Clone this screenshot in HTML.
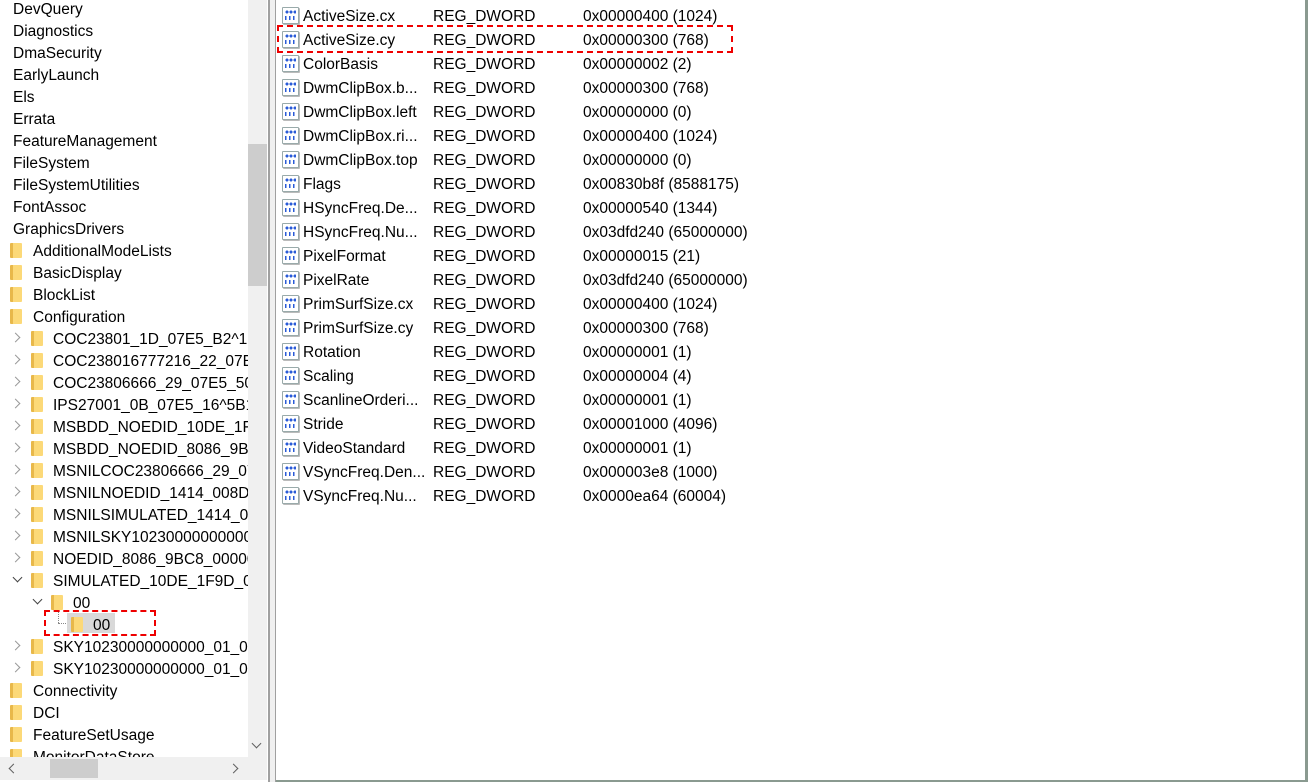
<!DOCTYPE html>
<html><head><meta charset="utf-8"><style>
body{margin:0;width:1308px;height:782px;background:#fff;position:relative;overflow:hidden;font-family:"Liberation Sans","Noto Sans CJK SC",sans-serif;font-size:15.5px;color:#000}
.l{position:absolute;white-space:nowrap;line-height:22px;height:22px;padding-top:2px}
.f{position:absolute;width:12px;height:15px;background:linear-gradient(90deg,#e8b84a 0 3px,#fcd978 3px);border-radius:1px}
.ch{position:absolute;width:6px;height:6px;border-right:1.5px solid #999;border-bottom:1.5px solid #999}
.r{position:absolute;left:280px;height:24px;line-height:24px;white-space:nowrap}
.r span{position:absolute;top:2px}
.ic{position:absolute;left:2px;top:4px;width:15px;height:15px;border:1px solid #9aa;background:#fff;border-radius:1px;box-shadow:1px 1px 0 #bbb}
.ic:before{content:"";position:absolute;left:2px;top:2px;width:11px;height:4px;background:radial-gradient(circle,#2a5bd7 1.4px,transparent 1.6px) 0 0/4px 4px}
.ic:after{content:"";position:absolute;left:2px;top:8px;width:11px;height:4px;background:linear-gradient(90deg,#2a5bd7 1.5px,transparent 1.5px) 0 0/4px 4px}
</style></head><body>
<div style="position:absolute;left:0;top:0;width:248px;height:757px;overflow:hidden">
<div class="l" style="left:13px;top:-3px">DevQuery</div>
<div class="l" style="left:13px;top:19px">Diagnostics</div>
<div class="l" style="left:13px;top:41px">DmaSecurity</div>
<div class="l" style="left:13px;top:63px">EarlyLaunch</div>
<div class="l" style="left:13px;top:85px">Els</div>
<div class="l" style="left:13px;top:107px">Errata</div>
<div class="l" style="left:13px;top:129px">FeatureManagement</div>
<div class="l" style="left:13px;top:151px">FileSystem</div>
<div class="l" style="left:13px;top:173px">FileSystemUtilities</div>
<div class="l" style="left:13px;top:195px">FontAssoc</div>
<div class="l" style="left:13px;top:217px">GraphicsDrivers</div>
<div class="f" style="left:10px;top:243px"></div><div class="l" style="left:33px;top:239px">AdditionalModeLists</div>
<div class="f" style="left:10px;top:265px"></div><div class="l" style="left:33px;top:261px">BasicDisplay</div>
<div class="f" style="left:10px;top:287px"></div><div class="l" style="left:33px;top:283px">BlockList</div>
<div class="f" style="left:10px;top:309px"></div><div class="l" style="left:33px;top:305px">Configuration</div>
<div class="ch" style="left:12px;top:334px;transform:rotate(-45deg)"></div><div class="f" style="left:31px;top:331px"></div><div class="l" style="left:53px;top:327px">COC23801_1D_07E5_B2^1E</div>
<div class="ch" style="left:12px;top:356px;transform:rotate(-45deg)"></div><div class="f" style="left:31px;top:353px"></div><div class="l" style="left:53px;top:349px">COC238016777216_22_07E5</div>
<div class="ch" style="left:12px;top:378px;transform:rotate(-45deg)"></div><div class="f" style="left:31px;top:375px"></div><div class="l" style="left:53px;top:371px">COC23806666_29_07E5_50</div>
<div class="ch" style="left:12px;top:400px;transform:rotate(-45deg)"></div><div class="f" style="left:31px;top:397px"></div><div class="l" style="left:53px;top:393px">IPS27001_0B_07E5_16^5B1</div>
<div class="ch" style="left:12px;top:422px;transform:rotate(-45deg)"></div><div class="f" style="left:31px;top:419px"></div><div class="l" style="left:53px;top:415px">MSBDD_NOEDID_10DE_1F9D</div>
<div class="ch" style="left:12px;top:444px;transform:rotate(-45deg)"></div><div class="f" style="left:31px;top:441px"></div><div class="l" style="left:53px;top:437px">MSBDD_NOEDID_8086_9BC8</div>
<div class="ch" style="left:12px;top:466px;transform:rotate(-45deg)"></div><div class="f" style="left:31px;top:463px"></div><div class="l" style="left:53px;top:459px">MSNILCOC23806666_29_07</div>
<div class="ch" style="left:12px;top:488px;transform:rotate(-45deg)"></div><div class="f" style="left:31px;top:485px"></div><div class="l" style="left:53px;top:481px">MSNILNOEDID_1414_008D</div>
<div class="ch" style="left:12px;top:510px;transform:rotate(-45deg)"></div><div class="f" style="left:31px;top:507px"></div><div class="l" style="left:53px;top:503px">MSNILSIMULATED_1414_00</div>
<div class="ch" style="left:12px;top:532px;transform:rotate(-45deg)"></div><div class="f" style="left:31px;top:529px"></div><div class="l" style="left:53px;top:525px">MSNILSKY10230000000000</div>
<div class="ch" style="left:12px;top:554px;transform:rotate(-45deg)"></div><div class="f" style="left:31px;top:551px"></div><div class="l" style="left:53px;top:547px">NOEDID_8086_9BC8_00000</div>
<div class="ch" style="left:14px;top:574px;transform:rotate(45deg);border-color:#444"></div><div class="f" style="left:31px;top:573px"></div><div class="l" style="left:53px;top:569px">SIMULATED_10DE_1F9D_00</div>
<div class="ch" style="left:34px;top:596px;transform:rotate(45deg);border-color:#444"></div><div class="f" style="left:51px;top:595px"></div><div class="l" style="left:73px;top:591px">00</div>
<div style="position:absolute;left:58px;top:611px;width:0;height:12px;border-left:1px dotted #888"></div>
<div style="position:absolute;left:58px;top:623px;width:10px;border-top:1px dotted #888"></div>
<div style="position:absolute;left:67px;top:613px;width:48px;height:20px;background:#d9d9d9"></div>
<div class="f" style="left:71px;top:617px"></div><div class="l" style="left:93px;top:613px">00</div>
<div style="position:absolute;left:44px;top:610px;width:108px;height:22px;border:2px dashed #e00"></div>
<div class="ch" style="left:12px;top:642px;transform:rotate(-45deg)"></div><div class="f" style="left:31px;top:639px"></div><div class="l" style="left:53px;top:635px">SKY10230000000000_01_0</div>
<div class="ch" style="left:12px;top:664px;transform:rotate(-45deg)"></div><div class="f" style="left:31px;top:661px"></div><div class="l" style="left:53px;top:657px">SKY10230000000000_01_0</div>
<div class="f" style="left:10px;top:683px"></div><div class="l" style="left:33px;top:679px">Connectivity</div>
<div class="f" style="left:10px;top:705px"></div><div class="l" style="left:33px;top:701px">DCI</div>
<div class="f" style="left:10px;top:727px"></div><div class="l" style="left:33px;top:723px">FeatureSetUsage</div>
<div class="f" style="left:10px;top:749px"></div><div class="l" style="left:33px;top:745px">MonitorDataStore</div>
</div>
<div style="position:absolute;left:248px;top:0;width:19px;height:757px;background:#f0f0f0"></div>
<div style="position:absolute;left:248px;top:144px;width:19px;height:142px;background:#cdcdcd"></div>
<div class="ch" style="left:253px;top:740px;transform:rotate(45deg);border-color:#606060"></div>
<div style="position:absolute;left:0;top:757px;width:267px;height:23px;background:#f0f0f0"></div>
<div style="position:absolute;left:50px;top:759px;width:48px;height:19px;background:#cdcdcd"></div>
<div class="ch" style="left:10px;top:765px;transform:rotate(135deg);border-color:#606060"></div>
<div class="ch" style="left:230px;top:765px;transform:rotate(-45deg);border-color:#606060"></div>
<div style="position:absolute;left:268px;top:0;width:2px;height:782px;background:#a0a0a0"></div>
<div style="position:absolute;left:270px;top:0;width:5px;height:782px;background:#f0f0f0"></div>
<div style="position:absolute;left:275px;top:0;width:1px;height:782px;background:#a0a0a0"></div>
<div style="position:absolute;left:1305px;top:0;width:3px;height:782px;background:#8a9a90"></div>
<div style="position:absolute;left:276px;top:780px;width:1032px;height:2px;background:#8a9a90"></div>
<div class="r" style="top:3px"><i class="ic"></i><span style="left:23px">ActiveSize.cx</span><span style="left:153px">REG_DWORD</span><span style="left:303px">0x00000400 (1024)</span></div>
<div class="r" style="top:27px"><i class="ic"></i><span style="left:23px">ActiveSize.cy</span><span style="left:153px">REG_DWORD</span><span style="left:303px">0x00000300 (768)</span></div>
<div style="position:absolute;left:277px;top:25px;width:452px;height:24px;border:2px dashed #e00"></div>
<div class="r" style="top:51px"><i class="ic"></i><span style="left:23px">ColorBasis</span><span style="left:153px">REG_DWORD</span><span style="left:303px">0x00000002 (2)</span></div>
<div class="r" style="top:75px"><i class="ic"></i><span style="left:23px">DwmClipBox.b...</span><span style="left:153px">REG_DWORD</span><span style="left:303px">0x00000300 (768)</span></div>
<div class="r" style="top:99px"><i class="ic"></i><span style="left:23px">DwmClipBox.left</span><span style="left:153px">REG_DWORD</span><span style="left:303px">0x00000000 (0)</span></div>
<div class="r" style="top:123px"><i class="ic"></i><span style="left:23px">DwmClipBox.ri...</span><span style="left:153px">REG_DWORD</span><span style="left:303px">0x00000400 (1024)</span></div>
<div class="r" style="top:147px"><i class="ic"></i><span style="left:23px">DwmClipBox.top</span><span style="left:153px">REG_DWORD</span><span style="left:303px">0x00000000 (0)</span></div>
<div class="r" style="top:171px"><i class="ic"></i><span style="left:23px">Flags</span><span style="left:153px">REG_DWORD</span><span style="left:303px">0x00830b8f (8588175)</span></div>
<div class="r" style="top:195px"><i class="ic"></i><span style="left:23px">HSyncFreq.De...</span><span style="left:153px">REG_DWORD</span><span style="left:303px">0x00000540 (1344)</span></div>
<div class="r" style="top:219px"><i class="ic"></i><span style="left:23px">HSyncFreq.Nu...</span><span style="left:153px">REG_DWORD</span><span style="left:303px">0x03dfd240 (65000000)</span></div>
<div class="r" style="top:243px"><i class="ic"></i><span style="left:23px">PixelFormat</span><span style="left:153px">REG_DWORD</span><span style="left:303px">0x00000015 (21)</span></div>
<div class="r" style="top:267px"><i class="ic"></i><span style="left:23px">PixelRate</span><span style="left:153px">REG_DWORD</span><span style="left:303px">0x03dfd240 (65000000)</span></div>
<div class="r" style="top:291px"><i class="ic"></i><span style="left:23px">PrimSurfSize.cx</span><span style="left:153px">REG_DWORD</span><span style="left:303px">0x00000400 (1024)</span></div>
<div class="r" style="top:315px"><i class="ic"></i><span style="left:23px">PrimSurfSize.cy</span><span style="left:153px">REG_DWORD</span><span style="left:303px">0x00000300 (768)</span></div>
<div class="r" style="top:339px"><i class="ic"></i><span style="left:23px">Rotation</span><span style="left:153px">REG_DWORD</span><span style="left:303px">0x00000001 (1)</span></div>
<div class="r" style="top:363px"><i class="ic"></i><span style="left:23px">Scaling</span><span style="left:153px">REG_DWORD</span><span style="left:303px">0x00000004 (4)</span></div>
<div class="r" style="top:387px"><i class="ic"></i><span style="left:23px">ScanlineOrderi...</span><span style="left:153px">REG_DWORD</span><span style="left:303px">0x00000001 (1)</span></div>
<div class="r" style="top:411px"><i class="ic"></i><span style="left:23px">Stride</span><span style="left:153px">REG_DWORD</span><span style="left:303px">0x00001000 (4096)</span></div>
<div class="r" style="top:435px"><i class="ic"></i><span style="left:23px">VideoStandard</span><span style="left:153px">REG_DWORD</span><span style="left:303px">0x00000001 (1)</span></div>
<div class="r" style="top:459px"><i class="ic"></i><span style="left:23px">VSyncFreq.Den...</span><span style="left:153px">REG_DWORD</span><span style="left:303px">0x000003e8 (1000)</span></div>
<div class="r" style="top:483px"><i class="ic"></i><span style="left:23px">VSyncFreq.Nu...</span><span style="left:153px">REG_DWORD</span><span style="left:303px">0x0000ea64 (60004)</span></div>
</body></html>
